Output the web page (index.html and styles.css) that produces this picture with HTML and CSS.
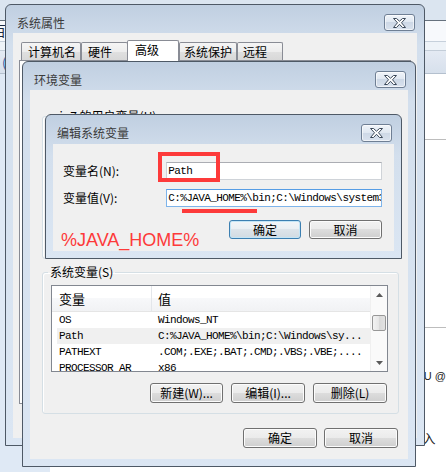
FILE: index.html
```html
<!DOCTYPE html>
<html lang="zh-CN">
<head>
<meta charset="utf-8">
<title>编辑系统变量</title>
<link rel="stylesheet" href="styles.css">
</head>
<body>
<div class="desk">
  <div class="band band-a"></div>
  <div class="band band-b"><span class="peek peek-b">百</span></div>
  <div class="band band-c"></div>
  <div class="band band-d"><span class="peek peek-d">(</span></div>
  <div class="desk-main">
    <div class="desk-left"></div>
    <div class="desk-right">
      <div class="rule rule-1"></div>
      <div class="rule rule-2"></div>
      <div class="desk-text cpu">CPU @</div>
      <div class="desk-text kbd">键盘输入</div>
    </div>
  </div>
</div>

<section class="win win-sys">
  <header class="titlebar">
    <span class="title">系统属性</span>
    <span class="close"><svg width="13" height="10" viewBox="0 0 13 10"><polygon points="0.5,0.5 3.5,0.5 6.5,3.2 9.5,0.5 12.5,0.5 8.5,4.75 12.5,9.5 9.5,9.5 6.5,6.3 3.5,9.5 0.5,9.5 4.5,4.75" fill="#fff" stroke="#3b4859" stroke-width="1"/></svg></span>
  </header>
  <div class="client sys-client">
    <div class="tabs">
      <span class="tab t1">计算机名</span>
      <span class="tab t2">硬件</span>
      <span class="tab t3 active">高级</span>
      <span class="tab t4">系统保护</span>
      <span class="tab t5">远程</span>
    </div>
    <div class="tabpage"></div>
  </div>
</section>

<section class="win win-env">
  <header class="titlebar">
    <span class="title">环境变量</span>
    <span class="close"><svg width="13" height="10" viewBox="0 0 13 10"><polygon points="0.5,0.5 3.5,0.5 6.5,3.2 9.5,0.5 12.5,0.5 8.5,4.75 12.5,9.5 9.5,9.5 6.5,6.3 3.5,9.5 0.5,9.5 4.5,4.75" fill="#fff" stroke="#3b4859" stroke-width="1"/></svg></span>
  </header>
  <div class="client env-client">
    <fieldset class="group user-group">
      <legend>win7 的用户变量(U)</legend>
    </fieldset>
    <fieldset class="group sys-group">
      <legend>系统变量(S)</legend>
      <div class="listview">
        <div class="lv-body">
          <div class="lv-head">
            <span class="lv-h1">变量</span>
            <span class="lv-h2">值</span>
          </div>
          <div class="lv-rows">
            <div class="lv-row"><span class="c1 mono">OS</span><span class="c2 mono">Windows_NT</span></div>
            <div class="lv-row sel"><span class="c1 mono">Path</span><span class="c2 mono">C:%JAVA_HOME%\bin;C:\Windows\sy...</span></div>
            <div class="lv-row"><span class="c1 mono">PATHEXT</span><span class="c2 mono">.COM;.EXE;.BAT;.CMD;.VBS;.VBE;....</span></div>
            <div class="lv-row"><span class="c1 mono">PROCESSOR_AR</span><span class="c2 mono">x86</span></div>
          </div>
        </div>
        <div class="scrollbar">
          <div class="sb-btn"><svg width="7" height="4" viewBox="0 0 7 4"><polygon points="0,4 3.5,0 7,4" fill="#5a5a5a"/></svg></div>
          <div class="sb-track"><div class="sb-thumb"></div></div>
          <div class="sb-btn"><svg width="7" height="4" viewBox="0 0 7 4"><polygon points="0,0 7,0 3.5,4" fill="#5a5a5a"/></svg></div>
        </div>
      </div>
      <div class="btnrow group-btns">
        <span class="btn w73">新建(W)...</span>
        <span class="btn w74">编辑(I)...</span>
        <span class="btn w74">删除(L)</span>
      </div>
    </fieldset>
    <div class="btnrow dlg-btns">
      <span class="btn w74">确定</span>
      <span class="btn w74">取消</span>
    </div>
  </div>
</section>

<section class="win win-edit">
  <header class="titlebar">
    <span class="title">编辑系统变量</span>
    <span class="close"><svg width="13" height="10" viewBox="0 0 13 10"><polygon points="0.5,0.5 3.5,0.5 6.5,3.2 9.5,0.5 12.5,0.5 8.5,4.75 12.5,9.5 9.5,9.5 6.5,6.3 3.5,9.5 0.5,9.5 4.5,4.75" fill="#fff" stroke="#3b4859" stroke-width="1"/></svg></span>
  </header>
  <div class="client edit-client">
    <div class="field">
      <span class="field-label">变量名(N):</span>
      <div class="field-input mono">Path</div>
    </div>
    <div class="field">
      <span class="field-label">变量值(V):</span>
      <div class="field-input focus mono">C:%JAVA_HOME%\bin;C:\Windows\system32;C:\Windows;</div>
    </div>
    <div class="btnrow edit-btns">
      <span class="btn default w72">确定</span>
      <span class="btn w73">取消</span>
    </div>
  </div>
</section>

<div class="mark mark-box"></div>
<div class="mark mark-line"></div>
<div class="mark mark-text">%JAVA_HOME%</div>
</body>
</html>
```

FILE: styles.css
```css
* { box-sizing: border-box; margin: 0; padding: 0; }
html, body { width: 446px; height: 472px; }
body {
  position: relative;
  overflow: hidden;
  background: #fff;
  font-family: "Noto Sans CJK SC", "Noto Sans", sans-serif;
  font-size: 12px;
  line-height: 16px;
  color: #000;
}

/* ---------- desktop behind the windows ---------- */
.desk { display: flex; flex-direction: column; height: 472px; }
.band { overflow: hidden; white-space: nowrap; }
.band-a { height: 20px; background: #dbe5f0; }
.band-b { height: 21px; background: #f7f9fc; border-top: 1px solid #66717d; }
.band-c { height: 9px; background: #eef3f8; border-top: 1px solid #c6d0db; }
.band-d { height: 23px; background: linear-gradient(#e4eaf3, #d7e0ec); border-top: 1px solid #c3cdd8; }
.peek { display: inline-block; color: #1b2a40; }
.peek-b { font-size: 14px; margin: 1px 0 0 -8px; }
.peek-d { font-size: 13px; margin: 4px 0 0 2px; color: #2a5aa0; }
.desk-main { flex: 1; display: flex; border-top: 1px solid #b4c0ce; }
.desk-left { width: 57px; background: #dfe9f5; }
.desk-right { flex: 1; background: #fff; }
.rule { height: 1px; background: #bdbdbd; }
.rule-1 { margin-top: 65px; }
.rule-2 { margin-top: 187px; }
.desk-text { white-space: nowrap; color: #1a1a1a; }
.cpu { font-family: "Liberation Sans", sans-serif; font-size: 11px; line-height: 14px; margin: 41px 0 0 359px; }
.kbd { font-size: 13px; line-height: 16px; margin: 47px 0 0 334px; }

/* ---------- windows ---------- */
.win {
  position: absolute;
  display: flex;
  flex-direction: column;
  border: 1px solid #4e5966;
  border-radius: 6px 6px 0 0;
  background: linear-gradient(#c0cfe1, #d3dfed 40px, #dbe6f3);
  padding: 0 7px 7px;
}
.win-sys { left: 5px; top: 4px; width: 420px; height: 442px; }
.win-env { left: 22px; top: 61px; width: 394px; height: 406px; }
.win-edit { left: 45px; top: 114px; width: 357px; height: 145px; }

.titlebar {
  height: 28px;
  flex: none;
  display: flex;
  justify-content: space-between;
  align-items: flex-start;
  padding: 0 2px 0 4px;
}
.win-edit .titlebar { height: 29px; }
.title { margin-top: 10px; color: #3a3a3a; white-space: nowrap; }
.close {
  margin-top: 9px;
  width: 31px;
  height: 17px;
  display: flex;
  align-items: center;
  justify-content: center;
  border: 1px solid #6f7f94;
  border-radius: 3px;
  background: linear-gradient(#f0f4f9, #dfe7f1 50%, #cdd8e6 50%, #d9e2ee);
  box-shadow: inset 0 0 0 1px rgba(255,255,255,0.6);
}
.win-edit .close { height: 18px; }

.client { flex: 1; background: #f0f0f0; }

/* ---------- system properties tabs ---------- */
.tabs {
  position: relative;
  z-index: 1;
  display: flex;
  align-items: flex-start;
  height: 20px;
  margin: 7px 0 0 8px;
}
.tab {
  height: 18px;
  margin-top: 2px;
  line-height: 17px;
  padding-left: 6px;
  border: 1px solid #898c95;
  border-bottom: none;
  border-radius: 2px 2px 0 0;
  background: linear-gradient(#f5f5f5, #ededed 50%, #e0e0e0 50%, #d8d8d8);
  white-space: nowrap;
}
.t1 { width: 60px; }
.t2 { width: 47px; }
.t3 { width: 52px; margin-left: -1px; padding-left: 7px; }
.t4 { width: 58px; padding-left: 4px; }
.t5 { width: 46px; padding-left: 5px; }
.tab.active {
  height: 21px;
  margin-top: 0;
  line-height: 18px;
  background: #fff;
}
.tabpage {
  height: 344px;
  margin: 0 6px;
  border: 1px solid #898c95;
  background: #fff;
}

/* ---------- environment variables ---------- */
.env-client { padding: 18px 9px 0 12px; }
.group {
  border: 1px solid #d5dfe5;
  border-radius: 3px;
  box-shadow: inset 1px 1px 0 #fff;
  padding: 0 10px 0 8px;
  min-width: 0;
}
.group legend {
  padding: 0 2px;
  margin-left: -3px;
  line-height: 16px;
  white-space: nowrap;
}
.user-group { height: 151px; }
.sys-group { height: 150px; margin-top: 5px; padding-top: 5px; padding-bottom: 10px; }

.listview {
  height: 87px;
  display: flex;
  border: 1px solid #828790;
  background: #fff;
}
.lv-body { flex: 1; overflow: hidden; }
.lv-head {
  display: flex;
  height: 26px;
  border-bottom: 1px solid #e5e5e5;
  background: linear-gradient(#fff, #fff 50%, #f7f8fa 50%, #f1f2f4);
  font-size: 13px;
  line-height: 25px;
}
.lv-h1 { width: 100px; padding-left: 7px; border-right: 1px solid #e3e6ea; }
.lv-h2 { padding-left: 6px; }
.lv-rows { padding-left: 5px; }
.lv-row { display: flex; height: 16px; line-height: 16px; white-space: nowrap; }
.lv-row.sel { background: #f0f0f0; }
.c1 { width: 94px; padding-left: 2px; }
.c2 { padding-left: 7px; }

.scrollbar {
  width: 17px;
  flex: none;
  display: flex;
  flex-direction: column;
  background: #fafafa;
  border-left: 1px solid #f0f0f0;
}
.sb-btn { height: 17px; display: flex; align-items: center; justify-content: center; }
.sb-track { flex: 1; padding: 12px 1px 0; }
.sb-thumb {
  height: 16px;
  border: 1px solid #979797;
  border-radius: 2px;
  background: linear-gradient(90deg, #f3f3f3, #e6e6e6 50%, #d9d9d9 50%, #e2e2e2);
}

.btnrow { display: flex; justify-content: flex-end; }
.group-btns { margin: 11px 1px 0 0; gap: 8px; }
.dlg-btns { margin: 14px 1px 0 0; gap: 7px; }

.btn {
  height: 20px;
  display: flex;
  align-items: center;
  justify-content: center;
  border: 1px solid #707070;
  border-radius: 3px;
  background: linear-gradient(#f2f2f2, #ebebeb 50%, #dddddd 50%, #cfcfcf);
  box-shadow: inset 0 0 0 1px #fcfcfc;
  white-space: nowrap;
}
.w72 { width: 72px; }
.w73 { width: 73px; }
.w74 { width: 74px; }
.btn.default {
  border-color: #3c7fb1;
  box-shadow: inset 0 0 0 1px #c4e5f6;
  background: linear-gradient(#f2f5f8, #eaeff3 50%, #dde4ea 50%, #d2dbe2);
}

/* ---------- edit dialog ---------- */
.edit-client { padding: 18px 12px 0 10px; }
.field { display: flex; align-items: center; height: 18px; }
.field + .field { margin-top: 9px; }
.field-label { width: 104px; white-space: nowrap; }
.field-input {
  width: 217px;
  height: 18px;
  padding-left: 1px;
  line-height: 16px;
  background: #fff;
  border: 1px solid #cfd3d8;
  border-top-color: #abadb3;
  overflow: hidden;
  white-space: nowrap;
}
.field-input.focus { border-color: #7eb4ea; border-top-color: #569de5; }
.edit-btns { margin-top: 13px; gap: 8px; }
.edit-btns .btn { height: 19px; }

.mono {
  font-family: "Liberation Mono", "DejaVu Sans Mono", monospace;
  font-size: 11px;
  letter-spacing: -0.6px;
}

/* ---------- red annotations over the screenshot ---------- */
.mark { position: absolute; }
.mark-box { left: 158px; top: 152px; width: 62px; height: 30px; border: 4px solid #fd3a3a; }
.mark-line { left: 182px; top: 209px; width: 75px; height: 4px; background: #fd3a3a; }
.mark-text {
  left: 61px;
  top: 229px;
  font-family: "Liberation Sans", sans-serif;
  font-size: 18px;
  line-height: 22px;
  color: #fd3a3a;
  white-space: nowrap;
}
```
